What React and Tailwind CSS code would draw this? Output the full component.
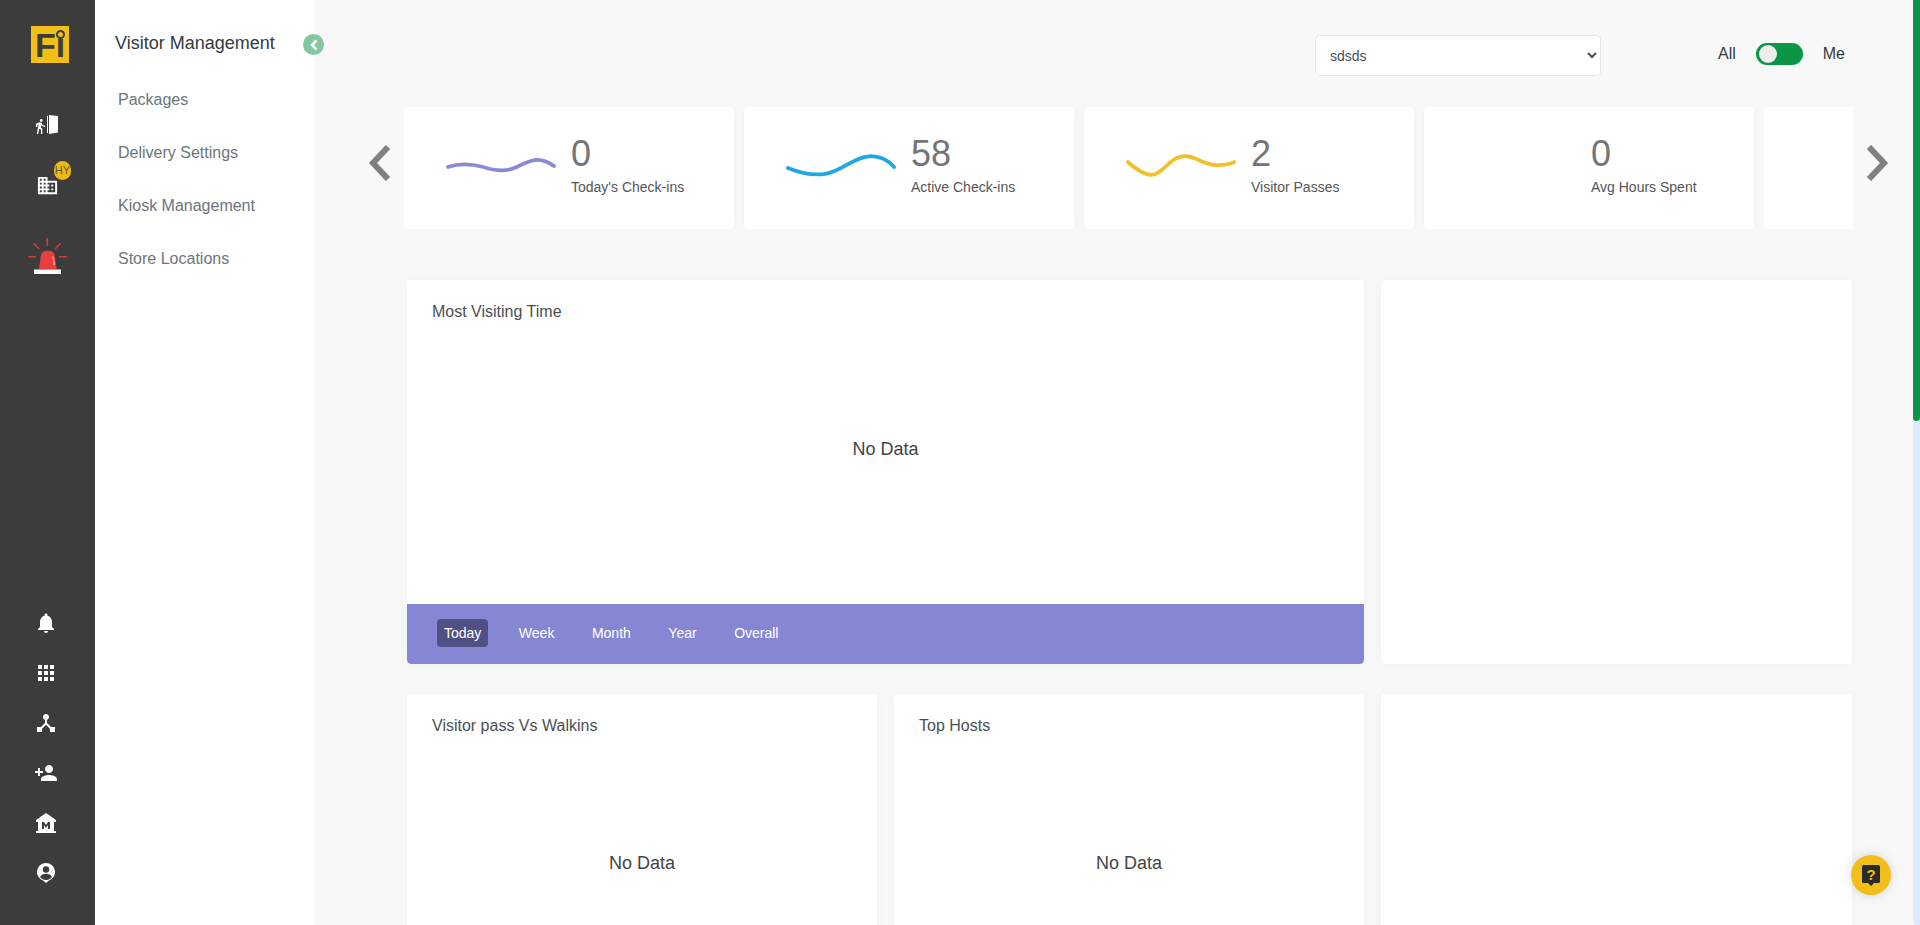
import { MdNotifications, MdApps, MdDeviceHub, MdPersonAdd, MdMuseum, MdDomain } from "react-icons/md";

const FONT = "font-['Liberation_Sans',Arial,sans-serif]";

const stats = [
	{ value: "0", label: "Today's Check-ins", color: "#8a89d6", wave: "M2 14 C 14 10, 26 11, 38 14 C 50 18, 62 19, 72 14 C 84 8, 94 2, 110 13" },
	{ value: "58", label: "Active Check-ins", color: "#1ca8e3", wave: "M2 15 C 14 20, 26 23, 40 21 C 56 19, 68 4, 86 3 C 96 3, 104 7, 110 14" },
	{ value: "2", label: "Visitor Passes", color: "#f2bf26", wave: "M2 9 C 10 16, 18 22, 26 22 C 38 22, 44 3, 60 3 C 72 3, 80 13, 94 12 C 100 12, 106 11, 110 9" },
	{ value: "0", label: "Avg Hours Spent" },
];

const menu = ["Packages", "Delivery Settings", "Kiosk Management", "Store Locations"];
const ranges = ["Today", "Week", "Month", "Year", "Overall"];

function DoorIcon() {
	return (
		<svg width="22" height="20" viewBox="0 0 22 20">
			<g transform="translate(-4.2 2.95) scale(0.7)">
				<path
					d="M13.5 5.5c1.1 0 2-.9 2-2s-.9-2-2-2-2 .9-2 2 .9 2 2 2zM9.8 8.9L7 23h2.1l1.8-8 2.1 2v6h2v-7.5l-2.1-2 .6-3C14.8 12 16.8 13 19 13v-2c-1.900 0-3.500-1-4.300-2.400l-1-1.600c-.4-.6-1-1-1.700-1-.3 0-.5.1-.8.1L6 8.300V13h2V9.600l1.800-.7"
					fill="#fff"
				/>
			</g>
			<path d="M11 1h1v17h-1z M13 0l9 1v16.500l-9 1.500z" fill="#fff" />
		</svg>
	);
}

function Alarm() {
	return (
		<svg width="41" height="37" viewBox="0 0 41 37">
			<path d="M20.300 0v7.700M7 5.300l5 5.700M33.700 5.300l-5.700 5.700M1.300 18.700h7.700M32 18.700h7.700" stroke="#d93a3a" strokeWidth="1.600" fill="none" />
			<path d="M12 31 L13.800 18 C14.400 14 17 12.700 20.800 12.700 C24.600 12.700 27.200 14 27.800 18 L29.700 31 Z" fill="#e83e3e" />
			<path d="M26 18.500l1.300 8.500" stroke="#fff" strokeWidth="0.800" />
			<rect x="7" y="31.500" width="27" height="4.500" fill="#fff" />
		</svg>
	);
}

function Logo() {
	return (
		<div className="relative flex h-[37px] w-[38px] items-center bg-[#f2bf16] pl-[4px]">
			<span className="text-[34px] leading-none font-bold text-[#3c3c3c]">Fi</span>
			<span className="absolute top-[4px] left-[25px] h-[9px] w-[9px] rounded-full border-2 border-[#3c3c3c] bg-[#f2bf16]"></span>
		</div>
	);
}

function PinUser() {
	return (
		<svg width="18" height="20" viewBox="0 0 18 20" className="my-[2px]">
			<path d="M9 0a9 9 0 0 1 3 17.500L9 20l-3-2.500A9 9 0 0 1 9 0z" fill="#fff" />
			<circle cx="9" cy="6.500" r="3.200" fill="#3c3c3c" />
			<path d="M3 14c1-2.500 3.500-3.300 6-3.300s5 .8 6 3.300c-1.500 2-3.500 3-6 3s-4.500-1-6-3z" fill="#3c3c3c" />
		</svg>
	);
}

function ChartCard({ title, className, children }) {
	return (
		<div className={`flex flex-col overflow-hidden rounded bg-white shadow-[0_0_12px_rgba(0,0,0,0.03)] ${className}`}>
			{title && <div className="px-[25px] pt-[22px] text-[16px] leading-5 text-[#4a4f55]">{title}</div>}
			{children}
		</div>
	);
}

function App() {
	return (
		<div className={`flex h-screen overflow-hidden bg-[#f8f8f8] ${FONT}`}>
			{/* icon rail */}
			<div className="flex w-[95px] shrink-0 flex-col items-start bg-[#3c3c3c] pb-[40px]">
				<div className="mt-[26px] ml-[31px]">
					<Logo />
				</div>
				<div className="mt-[52px] ml-[36px]">
					<DoorIcon />
				</div>
				<div className="relative mt-[39px] ml-[36px] text-white">
					<MdDomain size={23} />
					<span className="absolute top-[-13px] left-[18px] flex h-[19px] w-[17px] items-center justify-center rounded-full bg-[#edb916] text-[11px] text-[#5f5a30]">
						HY
					</span>
				</div>
				<div className="mt-[41px] ml-[27px]">
					<Alarm />
				</div>
				<div className="mt-auto flex w-[92px] flex-col items-center gap-[26px] text-white">
					<MdNotifications size={24} />
					<MdApps size={24} />
					<MdDeviceHub size={24} />
					<MdPersonAdd size={24} />
					<MdMuseum size={24} />
					<PinUser />
				</div>
			</div>

			{/* sub menu */}
			<div className="relative w-[220px] shrink-0 bg-white pt-[32px]">
				<div className="pl-[20px] text-[18px] leading-[22px] text-[#343a40]">Visitor Management</div>
				<div className="mt-[36px] flex flex-col gap-[33px] pl-[23px]">
					{menu.map((item) => (
						<div key={item} className="text-[16px] leading-5 text-[#6c757d]">
							{item}
						</div>
					))}
				</div>
				<button className="absolute top-[34px] right-[-9px] flex h-[21px] w-[21px] items-center justify-center rounded-full bg-[#82c9a1]">
					<svg width="10" height="12" viewBox="0 0 10 12">
						<path d="M7.500 1.500 L3 6 L7.500 10.500" fill="none" stroke="#fff" strokeWidth="2.600" />
					</svg>
				</button>
			</div>

			{/* main */}
			<div className="min-w-0 flex-1">
				<div className="h-[35px]"></div>
				<div className="flex items-start">
					<select className="ml-[1000px] h-[41px] w-[286px] rounded border border-[#e6e6e6] bg-white pl-[10px] text-[14px] text-[#495057]">
						<option>sdsds</option>
					</select>
					<div className="mt-[8px] ml-[117px] flex h-[22px] items-center text-[16px] text-[#343a40]">
						<span>All</span>
						<div className="mx-[20px] flex h-[22px] w-[47px] items-center rounded-full bg-[#0b9547] pl-[3px]">
							<span className="h-[18px] w-[18px] rounded-full bg-[#eeeeee]"></span>
						</div>
						<span>Me</span>
					</div>
				</div>

				{/* stat carousel */}
				<div className="mt-[31px] flex items-start">
					<svg width="24" height="36" viewBox="0 0 24 36" className="mt-[38px] mr-[12px] ml-[53px] shrink-0">
						<path d="M20 2 L5 18 L20 34" fill="none" stroke="#808080" strokeWidth="6" />
					</svg>
					<div className="flex w-[1449px] shrink-0 gap-[10px] overflow-hidden">
						{stats.map((s) => (
							<div key={s.label} className="flex h-[122px] w-[330px] shrink-0 rounded bg-white pl-[42px] shadow-[0_0_10px_rgba(0,0,0,0.03)]">
								<div className="mt-[46px] h-[30px] w-[125px] shrink-0">
									{s.wave && (
										<svg width="110" height="26" viewBox="0 0 112 26">
											<path d={s.wave} fill="none" stroke={s.color} strokeWidth="3.800" strokeLinecap="round" />
										</svg>
									)}
								</div>
								<div className="pt-[26px]">
									<div className="text-[36px] leading-[42px] text-[#757575]">{s.value}</div>
									<div className="mt-[2px] text-[14px] leading-5 text-[#555]">{s.label}</div>
								</div>
							</div>
						))}
						<div className="h-[122px] w-[330px] shrink-0 rounded bg-white"></div>
					</div>
					<svg width="24" height="36" viewBox="0 0 24 36" className="mt-[38px] ml-[12px] shrink-0">
						<path d="M4 2 L19 18 L4 34" fill="none" stroke="#808080" strokeWidth="6" />
					</svg>
				</div>

				{/* charts */}
				<div className="mt-[51px] ml-[92px] flex h-[384px] w-[1445px] gap-[17px]">
					<ChartCard title="Most Visiting Time" className="w-[957px]">
						<div className="flex flex-1 items-center justify-center pb-[28px] text-[18px] text-[#444]">No Data</div>
						<div className="flex h-[60px] items-center gap-[23.5px] rounded-b bg-[#8587d5] pb-[2px] pl-[30px] text-[14px] text-white">
							{ranges.map((r) => (
								<span key={r} className={r === "Today" ? "rounded bg-[#4f5184] px-[7px] py-[5px] leading-[18px]" : "px-[7px] py-[5px] leading-[18px]"}>
									{r}
								</span>
							))}
						</div>
					</ChartCard>
					<ChartCard className="w-[471px]" />
				</div>
				<div className="mt-[30px] ml-[92px] flex h-[300px] w-[1445px] gap-[17px]">
					<ChartCard title="Visitor pass Vs Walkins" className="w-[470px]">
						<div className="flex flex-1 justify-center pt-[114px] text-[18px] text-[#444]">No Data</div>
					</ChartCard>
					<ChartCard title="Top Hosts" className="w-[470px]">
						<div className="flex flex-1 justify-center pt-[114px] text-[18px] text-[#444]">No Data</div>
					</ChartCard>
					<ChartCard className="w-[471px]" />
				</div>
			</div>

			{/* scrollbar */}
			<div className="w-[7px] shrink-0 rounded-bl bg-[#dbeafe]">
				<div className="h-[421px] rounded-b-sm bg-[#0b9547]"></div>
			</div>

			{/* help */}
			<button className="absolute top-[855px] left-[1851px] flex h-[40px] w-[40px] items-center justify-center rounded-full bg-[#f2bf1a] shadow-[0_0_12px_rgba(0,0,0,0.15)]">
				<svg width="18" height="21" viewBox="0 0 18 21">
					<path d="M1.500 0h15A1.500 1.500 0 0 1 18 1.500v15a1.500 1.500 0 0 1-1.500 1.500H12l-3 3-3-3H1.500A1.500 1.500 0 0 1 0 16.500v-15A1.500 1.500 0 0 1 1.500 0z" fill="#2b2b2b" />
					<text x="9" y="14.500" textAnchor="middle" fontSize="15" fontWeight="700" fill="#f2bf1a">?</text>
				</svg>
			</button>
		</div>
	);
}

export default App;
